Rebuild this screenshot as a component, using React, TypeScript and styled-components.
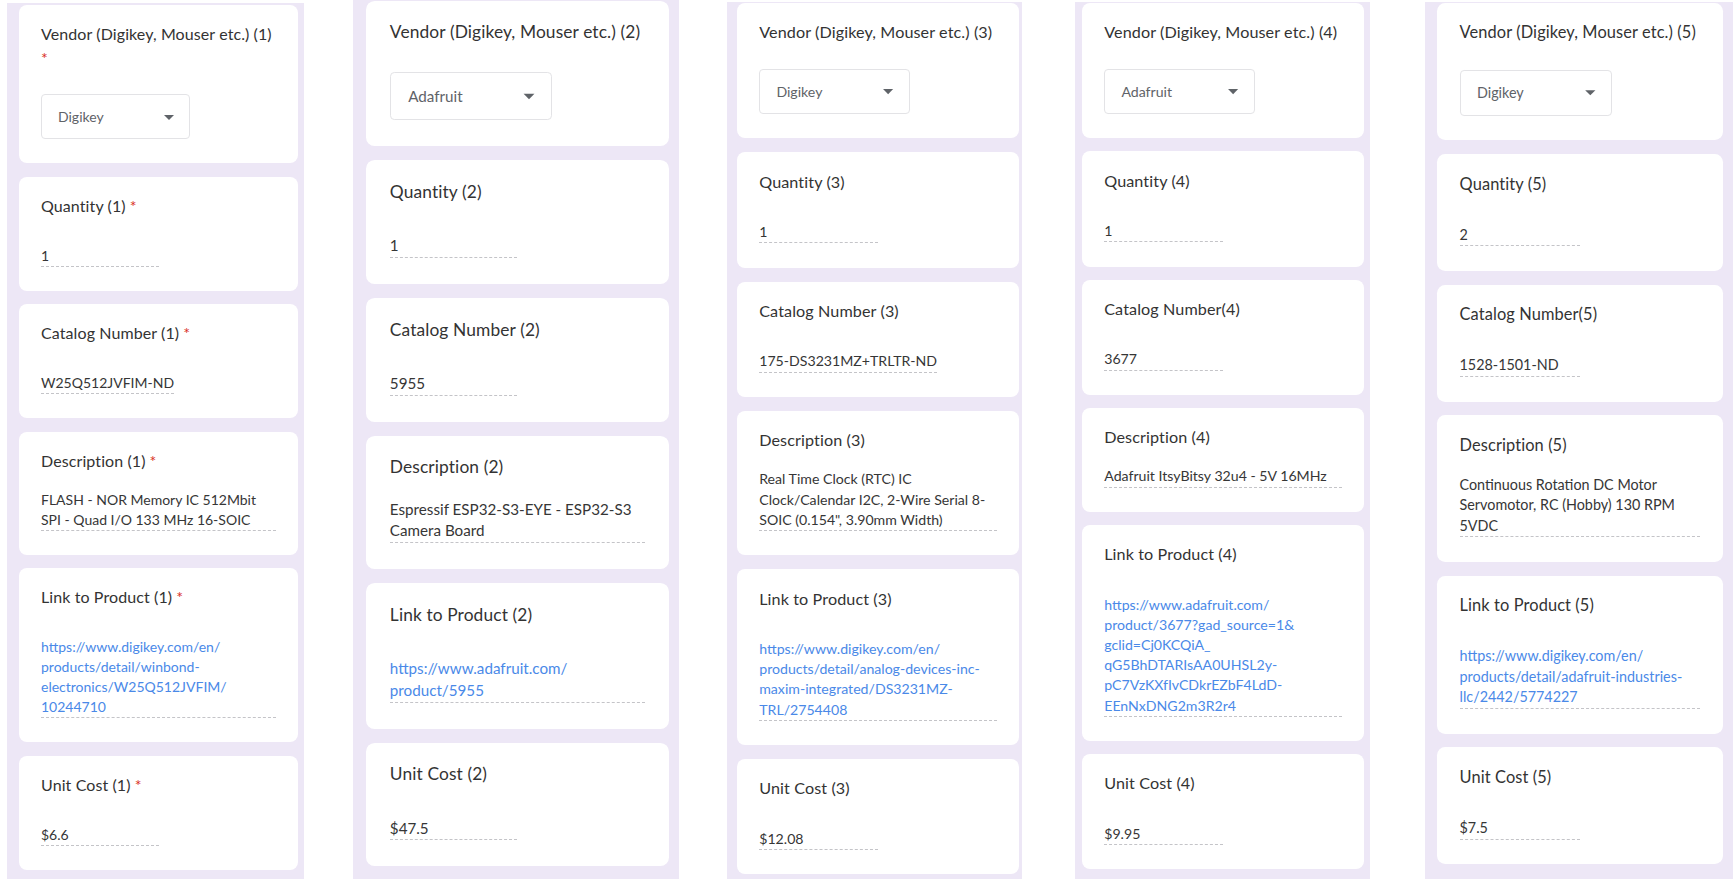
import React from 'react';
import styled, { createGlobalStyle } from 'styled-components';

const GlobalStyle = createGlobalStyle`
  html, body {
    margin: 0;
    padding: 0;
    background: #ffffff;
  }
  body {
    font-family: Lato, "Noto Sans", sans-serif;
    color: #202124;
  }
`;

const Page = styled.div`
  display: flex;
  flex-direction: row;
  align-items: stretch;
  width: 1733px;
  height: 879px;
  overflow: hidden;
`;

const Strip = styled.div<{ $gap: number; $width: number; $padLeft: number; $top: number; $padTop: number }>`
  flex: none;
  margin-left: ${(p) => p.$gap}px;
  margin-top: ${(p) => p.$top}px;
  width: ${(p) => p.$width}px;
  padding-left: ${(p) => p.$padLeft}px;
  padding-top: ${(p) => p.$padTop}px;
  box-sizing: border-box;
  background: #ede7f6;
  overflow: hidden;
`;

const Stack = styled.div<{ $zoom: number; $gap: number }>`
  zoom: ${(p) => p.$zoom};
  display: flex;
  flex-direction: column;
  gap: ${(p) => p.$gap}px;
  width: 279px;
`;

const Card = styled.div`
  background: #ffffff;
  border-radius: 8px;
  padding: 17px 22px 24px;
  box-sizing: border-box;
`;

const Title = styled.div`
  font-size: 16px;
  line-height: 24px;
  color: #333333;
  letter-spacing: 0.1px;
`;

const Star = styled.span<{ $own?: boolean }>`
  color: #d93025;
  margin-left: ${(p) => (p.$own ? 0 : 4)}px;
`;

const Dropdown = styled.div`
  margin-top: 24px;
  width: 149px;
  height: 45px;
  box-sizing: border-box;
  border: 1px solid #e3e3e6;
  border-radius: 4px;
  display: flex;
  align-items: center;
  justify-content: space-between;
  padding: 0 8px 0 16px;
  font-size: 14px;
  color: #5f6368;

  svg {
    flex: none;
  }
`;

const ShortAnswer = styled.div`
  margin-top: 28px;
  display: inline-block;
  min-width: 50%;
  font-size: 14px;
  line-height: 20px;
  color: #363636;
  border-bottom: 1px dashed #c4c4c8;
  white-space: nowrap;
`;

const LongAnswer = styled.div<{ $link?: boolean }>`
  margin-top: ${(p) => (p.$link ? 28 : 17)}px;
  font-size: 14px;
  line-height: 20px;
  color: ${(p) => (p.$link ? '#4a89e8' : '#363636')};
  border-bottom: 1px dashed #c4c4c8;
  white-space: nowrap;
`;

type Field =
  | { kind: 'select'; label: string; value: string }
  | { kind: 'short'; label: string; value: string }
  | { kind: 'paragraph'; label: string; lines: string[] }
  | { kind: 'link'; label: string; lines: string[] };

type Column = {
  gap: number;
  width: number;
  padLeft: number;
  top: number;
  padTop: number;
  zoom: number;
  cardGap: number;
  required: boolean;
  wrapFirst?: boolean;
  fields: Field[];
};

const columns: Column[] = [
  {
    gap: 7, width: 297, padLeft: 12, top: 3, padTop: 2, zoom: 1, cardGap: 13.5, required: true, wrapFirst: true,
    fields: [
      { kind: 'select', label: 'Vendor (Digikey, Mouser etc.) (1)', value: 'Digikey' },
      { kind: 'short', label: 'Quantity (1)', value: '1' },
      { kind: 'short', label: 'Catalog Number (1)', value: 'W25Q512JVFIM-ND' },
      { kind: 'paragraph', label: 'Description (1)', lines: ['FLASH - NOR Memory IC 512Mbit', 'SPI - Quad I/O 133 MHz 16-SOIC'] },
      { kind: 'link', label: 'Link to Product (1)', lines: ['https://www.digikey.com/en/', 'products/detail/winbond-', 'electronics/W25Q512JVFIM/', '10244710'] },
      { kind: 'short', label: 'Unit Cost (1)', value: '$6.6' },
    ],
  },
  {
    gap: 49, width: 326, padLeft: 13, top: 0, padTop: 1, zoom: 1.085, cardGap: 13, required: false,
    fields: [
      { kind: 'select', label: 'Vendor (Digikey, Mouser etc.) (2)', value: 'Adafruit' },
      { kind: 'short', label: 'Quantity (2)', value: '1' },
      { kind: 'short', label: 'Catalog Number (2)', value: '5955' },
      { kind: 'paragraph', label: 'Description (2)', lines: ['Espressif ESP32-S3-EYE - ESP32-S3', 'Camera Board'] },
      { kind: 'link', label: 'Link to Product (2)', lines: ['https://www.adafruit.com/', 'product/5955'] },
      { kind: 'short', label: 'Unit Cost (2)', value: '$47.5' },
    ],
  },
  {
    gap: 48, width: 295, padLeft: 10, top: 2, padTop: 1, zoom: 1.01, cardGap: 14, required: false,
    fields: [
      { kind: 'select', label: 'Vendor (Digikey, Mouser etc.) (3)', value: 'Digikey' },
      { kind: 'short', label: 'Quantity (3)', value: '1' },
      { kind: 'short', label: 'Catalog Number (3)', value: '175-DS3231MZ+TRLTR-ND' },
      { kind: 'paragraph', label: 'Description (3)', lines: ['Real Time Clock (RTC) IC', 'Clock/Calendar I2C, 2-Wire Serial 8-', 'SOIC (0.154", 3.90mm Width)'] },
      { kind: 'link', label: 'Link to Product (3)', lines: ['https://www.digikey.com/en/', 'products/detail/analog-devices-inc-', 'maxim-integrated/DS3231MZ-', 'TRL/2754408'] },
      { kind: 'short', label: 'Unit Cost (3)', value: '$12.08' },
    ],
  },
  {
    gap: 53, width: 295, padLeft: 7, top: 2, padTop: 1, zoom: 1.01, cardGap: 13, required: false,
    fields: [
      { kind: 'select', label: 'Vendor (Digikey, Mouser etc.) (4)', value: 'Adafruit' },
      { kind: 'short', label: 'Quantity (4)', value: '1' },
      { kind: 'short', label: 'Catalog Number(4)', value: '3677' },
      { kind: 'paragraph', label: 'Description (4)', lines: ['Adafruit ItsyBitsy 32u4 - 5V 16MHz'] },
      { kind: 'link', label: 'Link to Product (4)', lines: ['https://www.adafruit.com/', 'product/3677?gad_source=1&', 'gclid=Cj0KCQiA_', 'qG5BhDTARIsAA0UHSL2y-', 'pC7VzKXfIvCDkrEZbF4LdD-', 'EEnNxDNG2m3R2r4'] },
      { kind: 'short', label: 'Unit Cost (4)', value: '$9.95' },
    ],
  },
  {
    gap: 55, width: 308, padLeft: 12, top: 2, padTop: 1, zoom: 1.025, cardGap: 13.5, required: false,
    fields: [
      { kind: 'select', label: 'Vendor (Digikey, Mouser etc.) (5)', value: 'Digikey' },
      { kind: 'short', label: 'Quantity (5)', value: '2' },
      { kind: 'short', label: 'Catalog Number(5)', value: '1528-1501-ND' },
      { kind: 'paragraph', label: 'Description (5)', lines: ['Continuous Rotation DC Motor', 'Servomotor, RC (Hobby) 130 RPM', '5VDC'] },
      { kind: 'link', label: 'Link to Product (5)', lines: ['https://www.digikey.com/en/', 'products/detail/adafruit-industries-', 'llc/2442/5774227'] },
      { kind: 'short', label: 'Unit Cost (5)', value: '$7.5' },
    ],
  },
];

function ArrowDrop() {
  return (
    <svg width="24" height="24" viewBox="0 0 24 24">
      <path d="M7 10l5 5 5-5z" fill="#5f6368" />
    </svg>
  );
}

function Lines({ lines }: { lines: string[] }) {
  return (
    <>
      {lines.map((l, i) => (
        <div key={i}>{l}</div>
      ))}
    </>
  );
}

function FieldCard({ field, required, wrap }: { field: Field; required: boolean; wrap?: boolean }) {
  return (
    <Card>
      <Title>
        {field.label}
        {wrap && <br />}
        {required && <Star $own={wrap}>*</Star>}
      </Title>
      {field.kind === 'select' && (
        <Dropdown>
          <span>{field.value}</span>
          <ArrowDrop />
        </Dropdown>
      )}
      {field.kind === 'short' && <ShortAnswer>{field.value}</ShortAnswer>}
      {field.kind === 'paragraph' && (
        <LongAnswer>
          <Lines lines={field.lines} />
        </LongAnswer>
      )}
      {field.kind === 'link' && (
        <LongAnswer $link>
          <Lines lines={field.lines} />
        </LongAnswer>
      )}
    </Card>
  );
}

export default function App() {
  return (
    <>
      <GlobalStyle />
      <Page>
        {columns.map((col, ci) => (
          <Strip key={ci} $gap={col.gap} $width={col.width} $padLeft={col.padLeft} $top={col.top} $padTop={col.padTop}>
            <Stack $zoom={col.zoom} $gap={col.cardGap}>
              {col.fields.map((f, fi) => (
                <FieldCard key={fi} field={f} required={col.required} wrap={fi === 0 && col.wrapFirst} />
              ))}
            </Stack>
          </Strip>
        ))}
      </Page>
    </>
  );
}
